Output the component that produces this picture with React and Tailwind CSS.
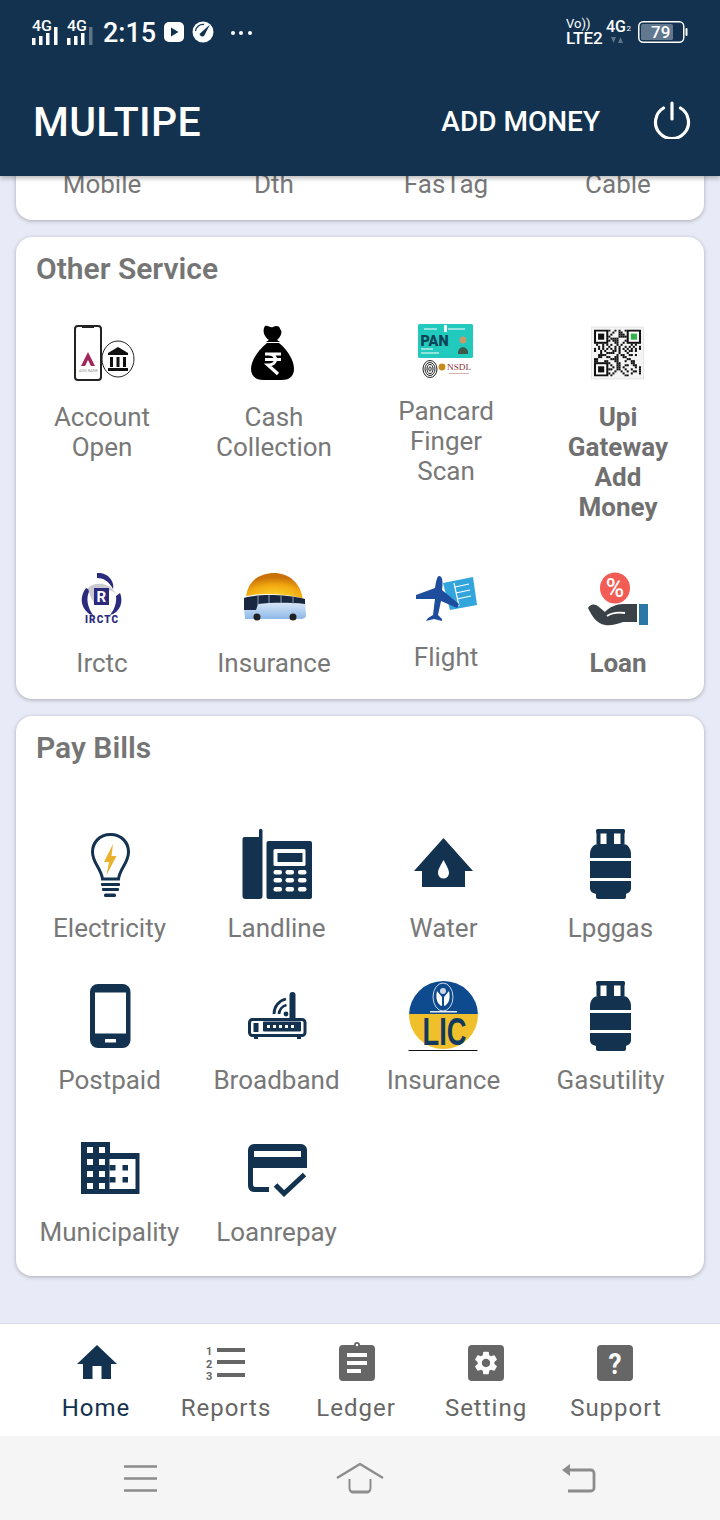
const NAVY = "#12324f";
const font = { fontFamily: "Roboto, sans-serif" };

function StatusBar() {
  const Signal = ({ full }) => (
    <svg width="30" height="28" viewBox="0 0 30 28" className="block">
      <text x="0" y="13" fill="#fff" fontSize="15" fontWeight="500" fontFamily="Roboto" textLength="20" lengthAdjust="spacingAndGlyphs">4G</text>
      <rect x="0" y="20" width="3.5" height="7" fill="#fff" />
      <rect x="7" y="18" width="3.5" height="9" fill="#fff" />
      <rect x="14" y="15" width="3.5" height="12" fill="#fff" />
      <rect x="22" y="9" width="3.5" height="18" fill={full ? "#fff" : "#5f7488"} />
    </svg>
  );
  return (
    <div className="h-[64px] pl-[32px] pr-[32px] flex items-center justify-between text-white">
      <div className="flex items-center">
        <Signal full />
        <div className="ml-[5px]"><Signal /></div>
        <span className="ml-[6px] mt-[1px] text-[27px] leading-[30px] font-medium">2:15</span>
        <svg width="22" height="22" viewBox="0 0 22 22" className="ml-[7px]">
          <rect x="1" y="1" width="20" height="20" rx="5" fill="#fff" />
          <path d="M8 6.5 L15.5 11 L8 15.5 Z" fill={NAVY} />
        </svg>
        <svg width="24" height="24" viewBox="0 0 24 24" className="ml-[6px]">
          <circle cx="12" cy="12" r="10.5" fill="#fff" />
          <path d="M8.5 14 L19 4.5 L13 16 A3 3 0 0 1 8.5 14 Z" fill={NAVY} />
          <path d="M4.5 11 A7.5 7.5 0 0 1 13 4.5" fill="none" stroke={NAVY} strokeWidth="1.4" />
        </svg>
        <svg width="24" height="6" viewBox="0 0 24 6" className="ml-[15px] mt-[1px]">
          <circle cx="3" cy="3" r="2" fill="#fff" /><circle cx="11" cy="3" r="2" fill="#fff" /><circle cx="20" cy="3" r="2" fill="#fff" />
        </svg>
      </div>
      <div className="flex items-center">
        <div className="w-[37px] flex flex-col text-white">
          <span className="text-[13px] leading-[13px]">Vo))</span>
          <span className="text-[17px] leading-[17px] font-medium">LTE2</span>
        </div>
        <div className="ml-[3px] w-[28px] relative h-[30px]">
          <svg width="28" height="30" viewBox="0 0 28 30">
            <text x="0" y="15" fill="#fff" fontSize="16" fontWeight="500" fontFamily="Roboto" textLength="20" lengthAdjust="spacingAndGlyphs">4G</text>
            <text x="20.5" y="14" fill="#fff" fontSize="8" fontFamily="Roboto">2</text>
            <path d="M5 20 h5 l-2.5 6z M12 26 h5 l-2.5 -6z" fill="#5f7488" />
          </svg>
        </div>
        <svg width="50" height="22" viewBox="0 0 50 22" className="ml-[4px]">
          <rect x="0.75" y="0.75" width="45" height="20.5" rx="4.5" fill="none" stroke="#fff" strokeWidth="1.5" />
          <rect x="3" y="3" width="32" height="16" rx="1.5" fill="#62788f" />
          <rect x="47.5" y="7" width="2" height="8" rx="1" fill="#fff" />
          <text x="13" y="16.5" fill="#fff" fontSize="17" fontWeight="500" fontFamily="Roboto">79</text>
        </svg>
      </div>
    </div>
  );
}

function Header() {
  return (
    <header className="relative z-10 h-[176px] shrink-0 bg-[#12324f] shadow-[0_2px_5px_rgba(0,0,0,0.3)]">
      <StatusBar />
      <div className="h-[112px] pl-[33px] pr-[29px] flex items-start justify-between text-white">
        <span className="mt-[33px] text-[41px] leading-[50px] font-medium tracking-[0.3px]">MULTIPE</span>
        <div className="flex items-start">
          <span className="mt-[40px] text-[28px] leading-[36px] font-medium">ADD MONEY</span>
          <svg width="38" height="38" viewBox="0 0 38 38" className="ml-[53px] mt-[37px]">
            <path d="M10.5 7 A16.5 16.5 0 1 0 27.5 7" fill="none" stroke="#fff" strokeWidth="3.2" strokeLinecap="round" />
            <path d="M19 2 V18" stroke="#fff" strokeWidth="3.2" strokeLinecap="round" />
          </svg>
        </div>
      </div>
    </header>
  );
}

const Svg66 = ({ children }) => <svg width="66" height="66" viewBox="0 0 66 66">{children}</svg>;

const AccountIcon = () => (
  <Svg66>
    <ellipse cx="49" cy="39" rx="16" ry="18" fill="#fff" stroke="#222" strokeWidth="1" />
    <rect x="6" y="6" width="26" height="54" rx="3" fill="#fff" stroke="#222" strokeWidth="2" />
    <rect x="13" y="6" width="12" height="2" fill="#222" />
    <path d="M19 32 L12 46 H16 L19 40 L22 46 H26 Z" fill="#a1275a" />
    <text x="10" y="52" fontSize="4" fill="#999" fontFamily="Roboto" textLength="19">AXIS BANK</text>
    <path d="M39 33 L49 27 L59 33 V35 H39 Z" fill="#111" />
    <path d="M41 37h3v10h-3z M47.5 37h3v10h-3z M54 37h3v10h-3z" fill="#111" />
    <rect x="39" y="48" width="20" height="3" fill="#111" />
  </Svg66>
);

const CashIcon = () => (
  <Svg66>
    <path d="M24 6 C27 5 29 8 32 7 C35 5 39 6 39 9 C42 11 40 17 36 20 L39 22 H25 L28 20 C23 17 21 10 24 6Z" fill="#000" />
    <path d="M26 23 H38 C47 30 53 41 53 49 C53 57 47 60 41 60 H22 C15 60 10 56 10 49 C10 41 17 30 26 23Z" fill="#000" />
    <path d="M24 34 H40 M24 39.5 H40 M27 34 C37 34 37 45 27 45 L37 54" fill="none" stroke="#fff" strokeWidth="3.2" />
  </Svg66>
);

const PancardIcon = () => (
  <Svg66>
    <rect x="5" y="4" width="55" height="34" rx="1.5" fill="#22c9bd" />
    <path d="M11 9 H24 M35 9 H52 M8 29 H20 M8 33 H26" stroke="#fff" strokeWidth="1" />
    <rect x="31" y="5" width="3" height="7" rx="1" fill="#fff" />
    <text x="7.5" y="25.5" fontSize="14" fontWeight="900" fill="#0e4457" fontFamily="Roboto" textLength="28" lengthAdjust="spacingAndGlyphs">PAN</text>
    <circle cx="50" cy="20" r="3.4" fill="#c89a68" />
    <path d="M45 34 C44 25 56 25 55 34Z" fill="#3d5a4a" />
    <g fill="none" stroke="#222" strokeWidth="1">
      <ellipse cx="17" cy="49" rx="7" ry="8.5" />
      <ellipse cx="17" cy="49" rx="5" ry="6.5" />
      <ellipse cx="17" cy="49" rx="3" ry="4.5" />
      <ellipse cx="17" cy="49" rx="1.2" ry="2.2" />
    </g>
    <circle cx="29" cy="47" r="3.4" fill="#c98a1a" />
    <text x="34" y="50" fontSize="9" fontWeight="500" fill="#8a2f35" fontFamily="Liberation Serif" textLength="24" lengthAdjust="spacingAndGlyphs">NSDL</text>
    <rect x="36" y="53" width="20" height="1" fill="#d9b0b0" />
  </Svg66>
);

const QrIcon = () => {
  const cells = [];
  const n = 23;
  const finder = (x, y) => (x < 7 && y < 7) || (x >= n - 7 && y < 7) || (x < 7 && y >= n - 7);
  for (let y = 0; y < n; y++)
    for (let x = 0; x < n; x++) {
      if (finder(x, y)) continue;
      if ((x * 7 + y * 13 + x * y * 3 + (x ^ y)) % 5 < 2) cells.push(<rect key={x + "-" + y} x={x} y={y} width="1" height="1" fill="#111" />);
    }
  const F = ({ x, y, c }) => (
    <g>
      <rect x={x} y={y} width="7" height="7" fill="#111" />
      <rect x={x + 1} y={y + 1} width="5" height="5" fill="#fff" />
      <rect x={x + 2} y={y + 2} width="3" height="3" fill={c} />
    </g>
  );
  return (
    <Svg66>
      <rect x="6.5" y="7" width="52" height="52" fill="#f4f4f4" stroke="#ddd" strokeWidth="0.7" />
      <svg x="9" y="9.5" width="47" height="47" viewBox="0 0 23 23">
        {cells}
        <F x={0} y={0} c="#111" />
        <F x={16} y={0} c="#2fb34a" />
        <F x={0} y={16} c="#111" />
      </svg>
    </Svg66>
  );
};

const IrctcIcon = () => (
  <Svg66>
    <path d="M28 7 C40 6 46 17 44 23 C40 15 34 12 28 12Z" fill="#2b2a7c" />
    <path d="M17 22 C11 30 11 40 19 47 C20 48 22 49 24 49 C19 42 16 32 21 24Z" fill="#2b2a7c" />
    <path d="M51 27 C55 37 50 47 41 49 C45 44 48 37 47 30Z" fill="#2b2a7c" />
    <path d="M19 22 C26 15 38 18 42 22 L50 30 C46 25 36 22 30 23 C26 24 24 32 26 38 C22 33 20 27 19 22Z" fill="#c9c9cf" />
    <rect x="25" y="22" width="15" height="17" fill="#2b2a7c" />
    <text x="27.5" y="36" fontSize="15" fontWeight="700" fill="#fff" fontFamily="Roboto">R</text>
    <text x="16" y="56.5" fontSize="10" fontWeight="900" fill="#2b2a7c" fontFamily="Roboto" textLength="33">IRCTC</text>
  </Svg66>
);

const BusIcon = () => (
  <Svg66>
    <defs>
      <radialGradient id="sun" cx="0.5" cy="0.95" r="0.8"><stop offset="0" stopColor="#ffe13a" /><stop offset="0.65" stopColor="#f2a90f" /><stop offset="1" stopColor="#c9720a" /></radialGradient>
      <linearGradient id="bus" x1="0" y1="0" x2="0" y2="1"><stop offset="0" stopColor="#ffffff" /><stop offset="1" stopColor="#8db8e8" /></linearGradient>
    </defs>
    <path d="M5 32 C6 14 20 7 33 7 C47 7 60 16 62 35 Z" fill="url(#sun)" />
    <path d="M3 31 C18 26 44 28 64 33 L65 50 C65 52 62 53 60 53 H4 L3 42Z" fill="url(#bus)" />
    <path d="M3 32 C14 28 44 28 64 33 V38 C44 36 28 37 17 38 L15 44 H3Z" fill="#1a2740" />
    <path d="M17 29v10 M28 29v8 M40 30v7 M52 31v7" stroke="#8aa0b8" strokeWidth="1" />
    <circle cx="16" cy="51" r="3.5" fill="#222" /><circle cx="52" cy="51" r="3.5" fill="#222" />
  </Svg66>
);

const FlightIcon = () => (
  <Svg66>
    <path d="M30 17 L60 11 L64 39 L37 44Z" fill="#32a5dc" />
    <path d="M42 21 L56 18 M43 27 L57 24 M44 33 L58 30 M41 17 L46 40" stroke="#fff" strokeWidth="1.2" />
    <path d="M26 10 C30 10 30 18 29 24 L46 38 L44 42 L28 35 L25 49 L29 53 L29 55 L21 53 L13 55 L15 52 L20 49 L22 33 L3 33 L3 29 L22 22 C23 16 24 10 26 10Z" fill="#1f4d9e" />
  </Svg66>
);

const LoanIcon = () => (
  <Svg66>
    <ellipse cx="30" cy="22" rx="15" ry="15.5" fill="#f25c54" />
    <text x="30" y="31" textAnchor="middle" fontSize="25" fontWeight="500" fill="#fff" fontFamily="Roboto">%</text>
    <path d="M3 42 C5 38 10 37 14 41 L20 46 C24 41 32 38 38 38 H52 V56 H38 C32 58 26 60 20 59 C12 58 7 50 3 42Z" fill="#3b4247" />
    <path d="M22 50 C28 46 33 46 40 47" fill="none" stroke="#fff" strokeWidth="1.8" />
    <rect x="54" y="38" width="9" height="21" fill="#2b78a8" />
  </Svg66>
);

const Svg76 = ({ children }) => <svg width="76" height="76" viewBox="0 0 76 76">{children}</svg>;

const BulbIcon = () => (
  <Svg76>
    <path d="M38.5 8.5 C27 8.5 20.5 17 20.5 26 C20.5 37 29 42 30.5 53 H46.5 C48 42 56.5 37 56.5 26 C56.5 17 50 8.5 38.5 8.5Z" fill="none" stroke={NAVY} strokeWidth="3" />
    <path d="M41 18 L32 36 H37 L34.5 49 L44.5 30 H39.5 Z" fill="#e9b22d" />
    <rect x="29" y="57" width="19" height="3" rx="1" fill={NAVY} />
    <rect x="30" y="62" width="17" height="3" rx="1" fill={NAVY} />
    <rect x="32" y="67.5" width="12" height="3.5" rx="1.5" fill={NAVY} />
  </Svg76>
);

const LandlineIcon = () => (
  <Svg76>
    <path d="M3.5 13 a2 2 0 0 1 2-2 H20 V4.5 a1.75 1.75 0 0 1 3.5 0 V70 a3 3 0 0 1-3 3 H6.5 a3 3 0 0 1-3-3Z" fill={NAVY} />
    <rect x="27.5" y="15" width="45.5" height="58" rx="2" fill={NAVY} />
    <rect x="34.5" y="23" width="32" height="17" rx="1.5" fill="#fff" />
    <rect x="38.5" y="27" width="25" height="9" fill={NAVY} />
    {[44, 52, 61].map((y) => [34.5, 46.5, 59].map((x) => <rect key={x + "," + y} x={x} y={y} width="8.5" height="4.5" rx="2" fill="#fff" />))}
  </Svg76>
);

const WaterIcon = () => (
  <Svg76>
    <path d="M37.5 12 L67 45 H59 V61 H16 V45 H8 Z" fill={NAVY} />
    <path d="M37.5 34 C40 39 43 43 43 47 A5.5 5.5 0 0 1 32 47 C32 43 35 39 37.5 34Z" fill="#fff" />
  </Svg76>
);

const GasIcon = () => (
  <Svg76>
    <rect x="23" y="3" width="29" height="4.5" rx="1.5" fill={NAVY} />
    <path d="M23.5 7h4v11h-4z M33.5 7h7.5v11h-7.5z M47.5 7h4v11h-4z" fill={NAVY} />
    <path d="M17 28 C17 22 21 18 25 18 H50 C55 18 58 23 58 28 V32 H17Z" fill={NAVY} />
    <rect x="17" y="35" width="41" height="17" fill={NAVY} />
    <path d="M17 55 H58 V62 C58 66 55 67 53 68 V71 a2 2 0 0 1-2 2 H25 a2 2 0 0 1-2-2 V68 C20 67 17 66 17 62Z" fill={NAVY} />
  </Svg76>
);

const PhoneIcon = () => (
  <Svg76>
    <rect x="18" y="6" width="40.5" height="64" rx="8" fill={NAVY} />
    <rect x="23" y="14.5" width="31" height="41" fill="#fff" />
    <rect x="33" y="61" width="11" height="3.5" rx="0.5" fill="#fff" />
  </Svg76>
);

const RouterIcon = () => (
  <Svg76>
    <rect x="50.5" y="14" width="6" height="36" rx="3" fill={NAVY} />
    <path d="M35 36 A15 15 0 0 1 47 21" fill="none" stroke={NAVY} strokeWidth="2.8" />
    <path d="M40 36 A10 10 0 0 1 47.5 27" fill="none" stroke={NAVY} strokeWidth="2.8" />
    <circle cx="47" cy="36" r="2.4" fill={NAVY} />
    <rect x="10.5" y="41.5" width="55.5" height="16" rx="3" fill="#fff" stroke={NAVY} strokeWidth="3" />
    <rect x="14.5" y="45" width="5" height="9" fill={NAVY} />
    <rect x="24" y="43.5" width="38" height="10" rx="1" fill={NAVY} />
    {[28, 34, 40, 46, 52].map((x) => <rect key={x} x={x} y="47" width="3" height="3" fill="#fff" />)}
    <rect x="15" y="58" width="4" height="3" fill={NAVY} /><rect x="58" y="58" width="4" height="3" fill={NAVY} />
  </Svg76>
);

const LicIcon = () => (
  <Svg76>
    <defs><clipPath id="licc"><ellipse cx="37.5" cy="37" rx="34.5" ry="34" /></clipPath></defs>
    <g clipPath="url(#licc)">
      <rect x="0" y="0" width="76" height="36" fill="#0d4a8e" />
      <rect x="0" y="36" width="76" height="40" fill="#efc02c" />
    </g>
    <ellipse cx="37" cy="19" rx="10" ry="14" fill="none" stroke="#cfd9e6" strokeWidth="1" />
    <path d="M31 13 L36 19 V28 C32 27 29 21 31 13Z M43 13 L38 19 V28 C42 27 45 21 43 13Z" fill="#fff" />
    <circle cx="37" cy="13" r="3" fill="#cfd9e6" />
    <rect x="24" y="33" width="27" height="1.5" fill="#e9edf2" />
    <text x="16.5" y="67" fontSize="38" fontWeight="700" fill="#123a5e" fontFamily="Liberation Sans" textLength="44" lengthAdjust="spacingAndGlyphs">LIC</text>
    <rect x="2.5" y="72" width="69" height="1" fill="#111" />
  </Svg76>
);

const MuniIcon = () => (
  <Svg76>
    <path d="M9 12 H38 V23 H67.5 V64 H9Z" fill={NAVY} />
    <rect x="37.5" y="29" width="26" height="30" fill="#fff" />
    {[17, 29, 41, 53].map((y) => [15, 27].map((x) => <rect key={x + ":" + y} x={x} y={y} width="6" height="6" fill="#fff" />))}
    {[35, 47].map((y) => <rect key={y} x="37.5" y={y} width="6" height="5.5" fill={NAVY} />)}
    {[35, 47].map((y) => <rect key={y} x="50.5" y={y} width="5.5" height="5.5" fill={NAVY} />)}
  </Svg76>
);

const LoanRepayIcon = () => (
  <Svg76>
    <path d="M15 14 H62 A6 6 0 0 1 68 20 V38 H14 V53 C14 56 14.5 57 17 57 H30 V62 H15 C11 62 9 59 9 55 V20 A6 6 0 0 1 15 14Z" fill={NAVY} />
    <rect x="15" y="21" width="47" height="6" fill="#fff" />
    <path d="M36.5 55 L45 63.5 L65.5 44.5" fill="none" stroke={NAVY} strokeWidth="5" />
  </Svg76>
);

const otherRows = [
  [
    { lines: ["Account", "Open"], Icon: AccountIcon },
    { lines: ["Cash", "Collection"], Icon: CashIcon },
    { lines: ["Pancard", "Finger", "Scan"], Icon: PancardIcon, raised: true },
    { lines: ["Upi", "Gateway", "Add", "Money"], Icon: QrIcon, bold: true },
  ],
  [
    { lines: ["Irctc"], Icon: IrctcIcon },
    { lines: ["Insurance"], Icon: BusIcon },
    { lines: ["Flight"], Icon: FlightIcon, raised: true },
    { lines: ["Loan"], Icon: LoanIcon, bold: true },
  ],
];

const bills = [
  ["Electricity", BulbIcon],
  ["Landline", LandlineIcon],
  ["Water", WaterIcon],
  ["Lpggas", GasIcon],
  ["Postpaid", PhoneIcon],
  ["Broadband", RouterIcon],
  ["Insurance", LicIcon],
  ["Gasutility", GasIcon],
  ["Municipality", MuniIcon],
  ["Loanrepay", LoanRepayIcon],
];

const cardClass = "bg-white rounded-[16px] shadow-[0_1px_4px_rgba(0,0,0,0.28)]";

function Title({ children }) {
  return <h2 className="pl-[20px] text-[30px] leading-[36px] font-semibold text-[#757575]">{children}</h2>;
}

function OtherService() {
  return (
    <section className={cardClass + " pt-[14px] pb-[21px]"}>
      <Title>Other Service</Title>
      <div className="mt-[33px] flex flex-col gap-[44px]">
        {otherRows.map((row, i) => (
          <div key={i} className="grid grid-cols-4">
            {row.map((it) => (
              <div key={it.lines.join()} className="flex flex-col items-center">
                <it.Icon />
                <div className={(it.raised ? "mt-[10px] " : "mt-[16px] ") + (it.bold ? "font-bold text-[#707070] " : "text-[#787878] ") + "text-[26px] leading-[30px] text-center"}>
                  {it.lines.map((l) => <div key={l}>{l}</div>)}
                </div>
              </div>
            ))}
          </div>
        ))}
      </div>
    </section>
  );
}

function PayBills() {
  return (
    <section className={cardClass + " pt-[14px] pb-[29px]"}>
      <Title>Pay Bills</Title>
      <div className="mt-[60px] px-[10px] grid grid-cols-4 gap-y-[35px]">
        {bills.map(([label, Icon]) => (
          <div key={label} className="flex flex-col items-center">
            <Icon />
            <div className="mt-[11px] text-[26px] leading-[30px] text-[#787878]">{label}</div>
          </div>
        ))}
      </div>
    </section>
  );
}

const navItems = [
  { label: "Home", active: true, icon: (
    <path d="M22 3 L42 22 H36 V37 H26.5 V24 H17.5 V37 H8 V22 H2 Z" fill={NAVY} />
  ) },
  { label: "Reports", icon: (
    <g>
      <text x="1" y="13" fontSize="11" fontWeight="700" fill="#666" fontFamily="Roboto">1</text>
      <text x="1" y="26" fontSize="11" fontWeight="700" fill="#666" fontFamily="Roboto">2</text>
      <text x="1" y="38" fontSize="11" fontWeight="700" fill="#666" fontFamily="Roboto">3</text>
      <rect x="12" y="6" width="28" height="4" fill="#666" />
      <rect x="12" y="18" width="28" height="4" fill="#666" />
      <rect x="12" y="31" width="28" height="4" fill="#666" />
    </g>
  ) },
  { label: "Ledger", icon: (
    <g>
      <rect x="4" y="3" width="36" height="36" rx="4" fill="#666" />
      <circle cx="22" cy="3" r="3" fill="#666" />
      <circle cx="22" cy="3" r="1.2" fill="#fff" />
      <rect x="12" y="11" width="20" height="4" fill="#fff" />
      <rect x="12" y="19" width="20" height="4" fill="#fff" />
      <rect x="12" y="27" width="14" height="4" fill="#fff" />
    </g>
  ) },
  { label: "Setting", icon: (
    <g>
      <rect x="3" y="3" width="36" height="36" rx="4" fill="#666" />
      <g transform="translate(7 7) scale(1.166)">
        <path fill="#fff" fillRule="evenodd" d="M19.14 12.94c.04-.3.06-.61.06-.94 0-.32-.02-.64-.07-.94l2.03-1.58a.49.49 0 0 0 .12-.61l-1.92-3.32a.488.488 0 0 0-.59-.22l-2.39.96c-.5-.38-1.03-.7-1.62-.94l-.36-2.54a.484.484 0 0 0-.48-.41h-3.84c-.24 0-.43.17-.47.41l-.36 2.54c-.59.24-1.13.57-1.62.94l-2.39-.96c-.22-.08-.47 0-.59.22L2.74 8.87c-.12.21-.08.47.12.61l2.03 1.58c-.05.3-.09.63-.09.94s.02.64.07.94l-2.03 1.58a.49.49 0 0 0-.12.61l1.92 3.32c.12.22.37.29.59.22l2.39-.96c.5.38 1.03.7 1.62.94l.36 2.54c.05.24.24.41.48.41h3.84c.24 0 .44-.17.47-.41l.36-2.54c.59-.24 1.13-.56 1.62-.94l2.39.96c.22.08.47 0 .59-.22l1.92-3.32c.12-.22.07-.47-.12-.61l-2.01-1.58zM12 15.6c-1.98 0-3.6-1.62-3.6-3.6s1.62-3.6 3.6-3.6 3.6 1.62 3.6 3.6-1.62 3.6-3.6 3.6z" />
      </g>
    </g>
  ) },
  { label: "Support", icon: (
    <g>
      <rect x="2" y="3" width="36" height="36" rx="4" fill="#666" />
      <text x="20" y="32" textAnchor="middle" fontSize="30" fontWeight="700" fill="#fff" fontFamily="Roboto" textLength="13" lengthAdjust="spacingAndGlyphs">?</text>
    </g>
  ) },
];

function BottomNav() {
  return (
    <nav className="h-[113px] shrink-0 bg-white border-t border-[#d8dae6] pl-[31px] pr-[39px] pt-[18px] grid grid-cols-5">
      {navItems.map((n) => (
        <div key={n.label} className="flex flex-col items-center">
          <svg width="42" height="42" viewBox="0 0 42 42">{n.icon}</svg>
          <span className={(n.active ? "text-[#12324f] " : "text-[#666666] ") + "mt-[9px] text-[24px] leading-[30px] tracking-[1px]"}>{n.label}</span>
        </div>
      ))}
    </nav>
  );
}

function SystemNav() {
  return (
    <div className="h-[84px] shrink-0 bg-[#f5f5f5] px-[30px] grid grid-cols-3 items-center">
      <div className="flex justify-center">
        <svg width="34" height="28" viewBox="0 0 34 28">
          <path d="M1 2.5H34 M1 14.5H34 M1 26.5H34" stroke="#8c8c8c" strokeWidth="2.6" />
        </svg>
      </div>
      <div className="flex justify-center">
        <svg width="48" height="32" viewBox="0 0 48 32">
          <path d="M1 16 L24 2 L47 16" fill="none" stroke="#8c8c8c" strokeWidth="2.4" strokeLinejoin="round" />
          <path d="M9 17 V26 A4 4 0 0 0 13 30 H35 A4 4 0 0 0 39 26 V17" fill="none" stroke="#8c8c8c" strokeWidth="2.8" transform="translate(24 0) scale(0.7 1) translate(-24 0)" />
        </svg>
      </div>
      <div className="flex justify-center pr-[4px]">
        <svg width="36" height="30" viewBox="0 0 36 30">
          <path d="M2 7 L10 1 V13 Z" fill="#8c8c8c" />
          <path d="M8 7 H31 A3 3 0 0 1 34 10 V25 A3 3 0 0 1 31 28 H8" fill="none" stroke="#8c8c8c" strokeWidth="2.8" />
        </svg>
      </div>
    </div>
  );
}

export default function App() {
  return (
    <div className="w-[720px] h-[1520px] overflow-hidden flex flex-col bg-[#e8ebf7]" style={font}>
      <Header />
      <main className="flex-1 overflow-hidden px-[16px] flex flex-col gap-[17px]">
        <section className={cardClass + " -mt-[20px] pt-[13px] pb-[21px] grid grid-cols-4 text-center text-[26px] leading-[30px] text-[#787878]"}>
          <div>Mobile</div>
          <div>Dth</div>
          <div>FasTag</div>
          <div>Cable</div>
        </section>
        <OtherService />
        <PayBills />
      </main>
      <BottomNav />
      <SystemNav />
    </div>
  );
}
